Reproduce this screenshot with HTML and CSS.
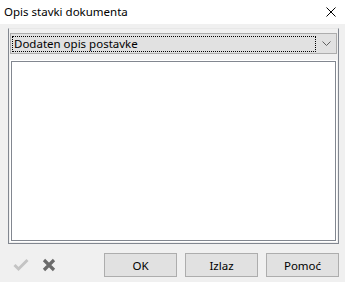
FILE: index.html
```html
<!DOCTYPE html>
<html>
<head>
<meta charset="utf-8">
<link rel="stylesheet" href="styles.css">
</head>
<body>
<div class="dialog">
  <div class="titlebar">
    <span class="title">Opis stavki dokumenta</span>
    <svg class="close" width="10" height="10" viewBox="0 0 10 10"><path d="M0.5 0.5 L9.5 9.5 M9.5 0.5 L0.5 9.5" stroke="#000" stroke-width="1" fill="none"/></svg>
  </div>
  <div class="content">
    <div class="frame">
      <div class="combo">
        <div class="combo-focus">Dodaten opis postavke</div>
        <svg class="chevron" width="9" height="5" viewBox="0 0 9 5"><path d="M0.5 0.5 L4.5 4.5 L8.5 0.5" stroke="#606060" stroke-width="1" fill="none"/></svg>
      </div>
      <div class="memo"></div>
    </div>
    <div class="footer">
      <div class="tools">
        <svg class="ico" width="16" height="14" viewBox="0 0 16 14"><path d="M1.5 7 L5.5 11 L14.5 2" stroke="#c4c4c4" stroke-width="3" fill="none"/></svg>
        <svg class="ico" width="14" height="14" viewBox="0 0 14 14"><path d="M2 2 L12 12 M12 2 L2 12" stroke="#6b6b6b" stroke-width="3.2" fill="none"/></svg>
      </div>
      <div class="buttons">
        <div class="btn">OK</div>
        <div class="btn">Izlaz</div>
        <div class="btn">Pomoć</div>
      </div>
    </div>
  </div>
</div>
</body>
</html>
```
FILE: styles.css
```css
html, body {
  margin: 0;
  padding: 0;
}
body {
  width: 345px;
  height: 282px;
  background: #f0f0f0;
  font-family: "Noto Sans", "Open Sans", sans-serif;
  font-size: 11.5px;
  color: #000;
  overflow: hidden;
}
.dialog {
  display: flex;
  flex-direction: column;
  height: 282px;
}
.titlebar {
  height: 24px;
  background: #fff;
  display: flex;
  align-items: center;
  justify-content: space-between;
  padding: 0 9px 0 4px;
}
.title {
  font-size: 11.5px;
  line-height: 16px;
  margin-top: -1px;
}
.close {
  display: block;
}
.content {
  flex: 1;
  display: flex;
  flex-direction: column;
  padding: 4px 6px 0 8px;
}
.frame {
  height: 216px;
  box-sizing: border-box;
  border: 1px solid #828790;
  border-top-color: #e8e8e8;
  padding: 4px 1px 1px 1px;
  display: flex;
  flex-direction: column;
  gap: 6px;
}
.combo {
  height: 21px;
  box-sizing: border-box;
  border: 1px solid #adadad;
  background: #e1e1e1;
  display: flex;
  align-items: center;
  padding: 1px 5px 1px 1px;
  gap: 6px;
}
.combo-focus {
  flex: 1;
  height: 16px;
  box-sizing: border-box;
  border: 1px dotted #000;
  line-height: 14px;
  padding-left: 1px;
  white-space: nowrap;
}
.chevron {
  display: block;
}
.memo {
  flex: 1;
  background: #fff;
  border: 1px solid #828790;
  box-shadow: 0 0 0 1px #fff;
  margin: 1px;
}
.footer {
  display: flex;
  justify-content: space-between;
  align-items: center;
  margin-top: 9px;
}
.tools {
  display: flex;
  align-items: center;
  gap: 13px;
  padding-left: 5px;
}
.ico {
  display: block;
}
.buttons {
  display: flex;
  gap: 8px;
}
.btn {
  width: 73px;
  height: 24px;
  box-sizing: border-box;
  border: 1px solid #adadad;
  background: #e1e1e1;
  display: flex;
  align-items: center;
  justify-content: center;
  font-size: 11.5px;
}
```
